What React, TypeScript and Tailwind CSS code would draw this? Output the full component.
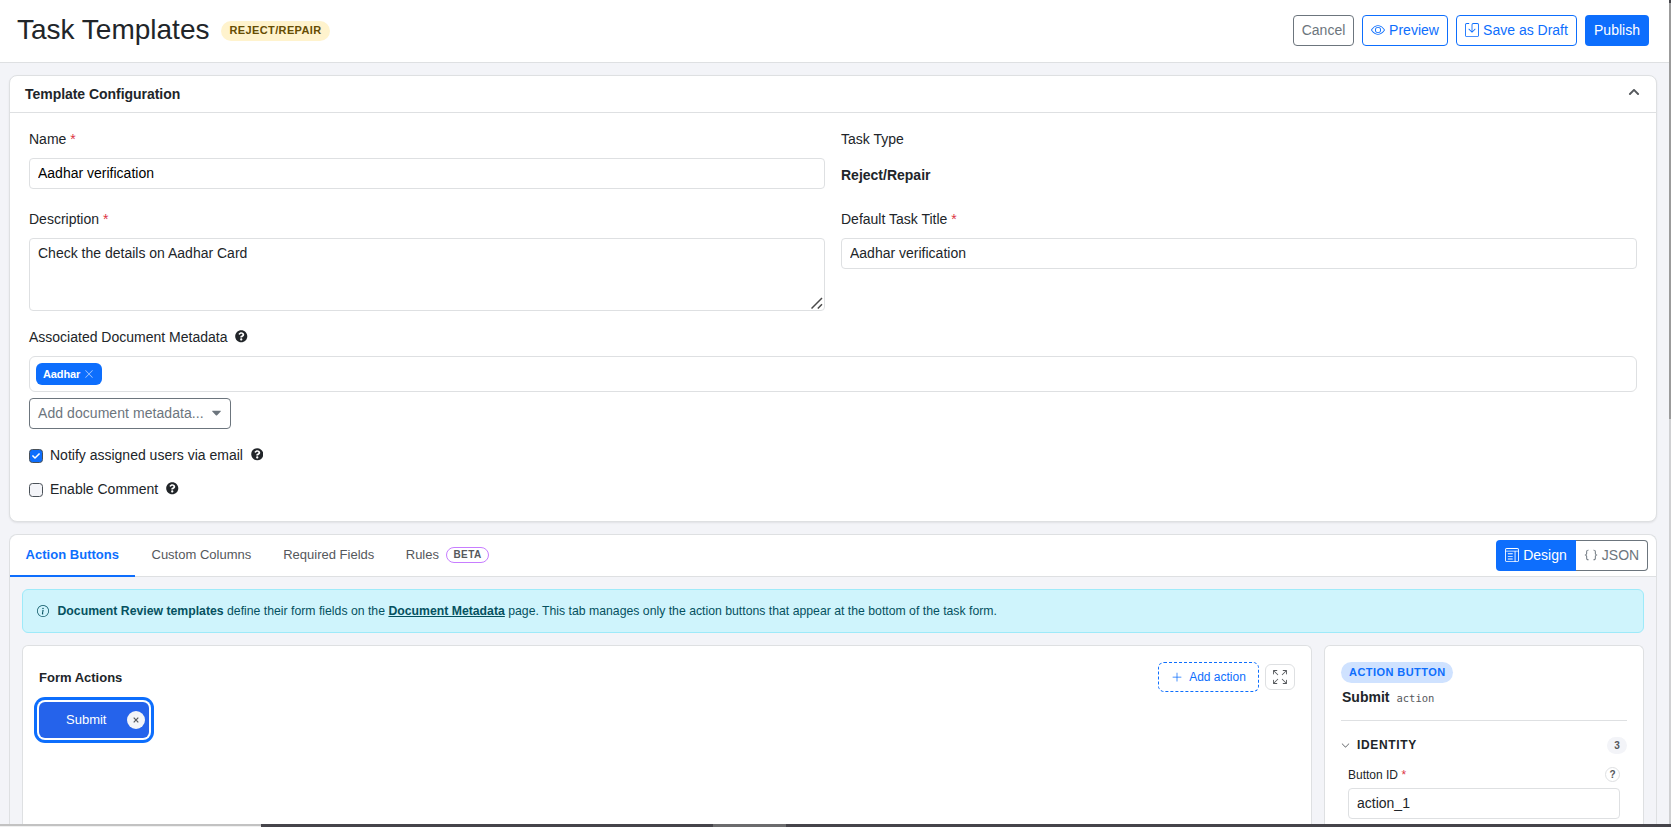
import React from 'react';
import {
  BsArrowsFullscreen,
  BsBraces,
  BsChevronDown,
  BsEye,
  BsInfoCircle,
  BsLayoutTextWindow,
  BsPlusLg,
  BsSave,
  BsXLg,
} from 'react-icons/bs';
import { FaCaretDown, FaCheck, FaChevronUp, FaQuestionCircle } from 'react-icons/fa';

const tabs = ['Custom Columns', 'Required Fields'];

function Required() {
  return <span className="text-[#dc3545]">*</span>;
}

function Label({ text, required }: { text: string; required?: boolean }) {
  return (
    <div className="h-[21px] mb-2 leading-[21px]">
      {text} {required && <Required />}
    </div>
  );
}

function Header() {
  return (
    <header className="flex items-center shrink-0 h-[63px] pl-[17px] pr-5 pb-px bg-white border-b border-[#dee0e2]">
      <h1 className="pb-px text-[28px] leading-[34px]">Task Templates</h1>
      <span className="flex items-center h-5 w-[109px] ml-3 pl-2 pt-px rounded-full bg-[#fff3cd] text-[#664d03] text-[11px] font-bold tracking-[0.38px]">
        REJECT/REPAIR
      </span>
      <div className="flex gap-2 ml-auto">
        <button className="h-[31px] w-[61px] pb-0.5 border border-[#6c757d] rounded text-[#6c757d]">Cancel</button>
        <button className="flex items-center justify-center gap-1 h-[31px] w-[86px] pb-0.5 border border-[#0d6efd] rounded text-[#0d6efd]">
          <BsEye size={14} />
          Preview
        </button>
        <button className="flex items-center justify-center gap-1 h-[31px] w-[121px] pb-0.5 border border-[#0d6efd] rounded text-[#0d6efd]">
          <BsSave size={14} />
          Save as Draft
        </button>
        <button className="h-[31px] w-16 pb-0.5 rounded bg-[#0d6efd] text-white">Publish</button>
      </div>
    </header>
  );
}

function Configuration() {
  return (
    <section className="shrink-0 h-[447px] border border-[#dee0e2] rounded-lg bg-white shadow-[0_1px_2px_rgba(0,0,0,0.08)]">
      <div className="flex items-center justify-between h-[37px] pl-[15px] pr-4 border-b border-[#dee0e2]">
        <h2 className="font-bold tracking-[-0.04px]">Template Configuration</h2>
        <FaChevronUp size={12} className="text-[#55585c] mb-1" />
      </div>
      <div className="px-[19px] pt-4">
        <div className="grid grid-cols-2 gap-x-4">
          <div className="h-20">
            <Label text="Name" required />
            <input
              className="block w-full h-[31px] px-2 pb-0.5 border border-[#dee0e2] rounded text-black"
              defaultValue="Aadhar verification"
            />
          </div>
          <div className="h-20">
            <Label text="Task Type" />
            <div className="pt-[7px] font-bold leading-[21px]">Reject/Repair</div>
          </div>
          <div className="h-[118px]">
            <Label text="Description" required />
            <div className="relative">
              <textarea
                className="block w-full h-[73px] px-2 py-1 border border-[#dee0e2] rounded leading-[21px] resize-none"
                defaultValue="Check the details on Aadhar Card"
              />
              <svg
                className="absolute right-0.5 bottom-0.5 text-[#4a4a4a]"
                width="12"
                height="12"
                viewBox="0 0 12 12"
                stroke="currentColor"
                strokeWidth="1.5"
              >
                <path d="M.5 11.5L11 1M6.8 11.5L11 7.3" />
              </svg>
            </div>
          </div>
          <div className="h-[118px]">
            <Label text="Default Task Title" required />
            <input
              className="block w-full h-[31px] px-2 pb-0.5 border border-[#dee0e2] rounded"
              defaultValue="Aadhar verification"
            />
          </div>
        </div>
        <div className="flex items-center gap-2 h-[21px] -mt-px mb-[9px]">
          Associated Document Metadata
          <FaQuestionCircle size={12.5} />
        </div>
        <div className="flex items-center h-9 px-1.5 border border-[#dee0e2] rounded-md">
          <span className="flex items-center gap-[4px] h-[22px] w-[66px] pl-[7px] rounded-md bg-[#0d6efd] text-white text-[11px] font-bold tracking-[-0.1px]">
            <span className="pt-px">Aadhar</span>
            <BsXLg size={10} className="opacity-70" />
          </span>
        </div>
        <button className="flex items-center justify-between w-[202px] h-[31px] mt-1.5 pl-2 pr-1.5 pb-0.5 border border-[#6c757d] rounded text-[#6c757d]">
          <span className="tracking-[0.06px]">Add document metadata...</span>
          <FaCaretDown size={15} />
        </button>
        <div className="flex items-center h-[21px] mt-[15px]">
          <span className="flex items-center justify-center size-3.5 mt-[3px] mr-[7px] rounded-[3.5px] border border-[#495057] bg-[#0d6efd]">
            <FaCheck size={8} className="text-white" />
          </span>
          Notify assigned users via email
          <FaQuestionCircle size={12.5} className="ml-2" />
        </div>
        <div className="flex items-center h-[21px] mt-[13px]">
          <span className="size-3.5 mt-[3px] mr-[7px] rounded-[3.5px] border border-[#495057] bg-[#f3f4f8]" />
          Enable Comment
          <FaQuestionCircle size={12.5} className="ml-2" />
        </div>
      </div>
    </section>
  );
}

function TabBar() {
  return (
    <div className="flex h-[42px] shrink-0 bg-white border-b border-[#dee0e2] rounded-t-lg text-[13px] text-[#55585c]">
      <div className="w-[125px] h-[42px] pt-[11px] pl-[15.5px] border-b-2 border-[#0d6efd] text-[#0d6efd] font-bold tracking-[0.03px]">
        Action Buttons
      </div>
      {tabs.map((tab) => (
        <div key={tab} className="pt-[11px] pl-[16.5px] pr-[15.5px]">
          {tab}
        </div>
      ))}
      <div className="flex items-start pt-[11px] px-4">
        Rules
        <span className="flex items-center justify-center w-[43px] h-4 mt-px ml-[7px] border border-[#c77dff] rounded-lg text-[10px] font-bold tracking-[0.4px]">
          BETA
        </span>
      </div>
      <div className="flex ml-auto mt-[5px] mr-2 text-sm">
        <button className="flex items-center justify-center gap-1 w-20 h-[31px] pb-0.5 rounded-l bg-[#0d6efd] text-white">
          <BsLayoutTextWindow size={14} />
          Design
        </button>
        <button className="flex items-center justify-center gap-1 w-[72px] h-[31px] pb-0.5 border border-l-0 border-[#6c757d] rounded-r text-[#6c757d]">
          <BsBraces size={14} />
          JSON
        </button>
      </div>
    </div>
  );
}

function Canvas() {
  return (
    <div className="flex-1 px-4 pt-4 border border-b-0 border-[#dee0e2] rounded-t-md bg-white">
      <div className="flex items-center h-[30px]">
        <h3 className="pt-0.5 text-[13px] font-bold">Form Actions</h3>
        <button className="flex items-center justify-center gap-1.5 w-[101px] h-[30px] ml-auto border border-dashed border-[#0d6efd] rounded-md text-xs text-[#0d6efd]">
          <BsPlusLg size={12} />
          Add action
        </button>
        <button className="flex items-center justify-center w-[30px] h-[26px] ml-1.5 border border-[#dee0e2] rounded-md text-[#55585c]">
          <BsArrowsFullscreen size={14} />
        </button>
      </div>
      <div className="flex items-center w-[110px] h-9 mt-2.5 pl-[27px] pr-1 rounded-md bg-[#2563eb] shadow-[0_0_0_2px_#fff,0_0_0_5px_#0d6efd] text-[13px] text-white">
        Submit
        <span className="flex items-center justify-center size-[18px] ml-auto rounded-full bg-[#f3f4f8] text-[#55585c]">
          <svg width="6" height="6" viewBox="0 0 6 6" stroke="currentColor" strokeWidth="1.2">
            <path d="M.7.7l4.6 4.6M5.3.7L.7 5.3" />
          </svg>
        </span>
      </div>
    </div>
  );
}

function Inspector() {
  return (
    <aside className="w-[320px] shrink-0 px-4 pt-4 border border-b-0 border-[#dee0e2] rounded-t-md bg-white">
      <span className="flex items-center w-[112px] h-[21px] pl-2 rounded-full bg-[#cfe2ff] text-[11px] font-bold tracking-[0.44px] text-[#0d6efd] whitespace-nowrap">
        ACTION BUTTON
      </span>
      <div className="flex items-baseline gap-[7px] h-[38px] pt-1 pl-px border-b border-[#dee0e2] leading-5">
        <strong>Submit</strong>
        <span className="font-['DejaVu_Sans_Mono',monospace] text-[10.5px] text-[#55585c]">action</span>
      </div>
      <div className="flex items-center h-[17px] mt-4">
        <BsChevronDown size={9} className="text-[#55585c]" />
        <span className="ml-[7px] pb-0.5 text-xs font-bold tracking-[0.65px]">IDENTITY</span>
        <span className="flex items-center justify-center w-5 h-[17px] ml-auto pt-px rounded-full bg-[#f3f4f8] text-[10px] font-bold text-[#55585c]">
          3
        </span>
      </div>
      <div className="px-[7px] pt-[13px]">
        <div className="flex items-center justify-between h-[15px] mb-1.5 text-xs">
          <span>
            Button ID <Required />
          </span>
          <span className="flex items-center justify-center size-[15px] border border-[#dee0e2] rounded-full text-[10px] font-bold text-[#55585c]">
            ?
          </span>
        </div>
        <input
          className="block w-full h-[31px] px-2 pb-0.5 border border-[#dee0e2] rounded"
          defaultValue="action_1"
        />
      </div>
    </aside>
  );
}

export default function App() {
  return (
    <div className="flex flex-col h-screen overflow-hidden bg-[#f3f4f8] font-['Liberation_Sans',Arial,sans-serif] text-sm text-[#212529]">
      <div className="flex flex-1 min-h-0">
        <main className="flex flex-col flex-1 min-w-0 overflow-hidden">
          <Header />
          <div className="flex flex-col flex-1 min-h-0 gap-3 pt-3 pl-[9px] pr-3">
            <Configuration />
            <section className="flex flex-col flex-1 min-h-0 border border-b-0 border-[#dee0e2] rounded-t-lg">
              <TabBar />
              <div className="flex flex-col flex-1 min-h-0 gap-3 pt-3 px-3">
                <div className="flex items-center shrink-0 h-11 pl-3.5 border border-[#9eeaf9] rounded-md bg-[#cff4fc] text-[12.25px] text-[#055160]">
                  <BsInfoCircle size={12} className="mr-[8.5px] mb-px" />
                  <p className="pt-px">
                    <strong>Document Review templates</strong> define their form fields on the{' '}
                    <a href="#" className="font-bold underline">Document Metadata</a> page. This tab manages only the
                    action buttons that appear at the bottom of the task form.
                  </p>
                </div>
                <div className="flex flex-1 min-h-0 gap-3 overflow-hidden">
                  <Canvas />
                  <Inspector />
                </div>
              </div>
            </section>
          </div>
        </main>
        {/* scrollbar */}
        <div className="flex flex-col w-0.5 bg-[#cfd0d2]">
          <div className="h-[3px] bg-[#45454a]" />
          <div className="h-[416px] bg-[#9b9b9b]" />
        </div>
      </div>
      <div className="flex h-[3px] shrink-0 bg-[#45444a]">
        <div className="w-[261px] bg-[#f0f0f0] border-t-2 border-[#c2c2c2]" />
        <div className="w-[73px] ml-[452px] bg-[#6b6b6d]" />
      </div>
    </div>
  );
}
